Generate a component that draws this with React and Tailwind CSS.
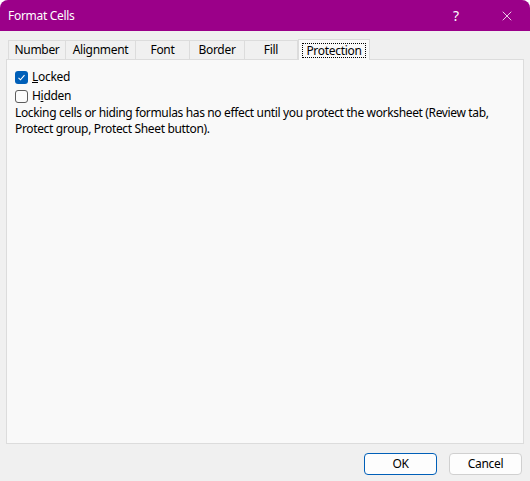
import { X } from "lucide-react";

const tabs = [
  { label: "Number", w: "w-[58px]" },
  { label: "Alignment", w: "w-[70px]" },
  { label: "Font", w: "w-[54px]" },
  { label: "Border", w: "w-[55px]" },
  { label: "Fill", w: "w-[53px]" },
];

function Checkbox({ checked }) {
  return checked ? (
    <span className="w-[13px] h-[13px] rounded-[3px] bg-[#005fb8] flex items-center justify-center">
      <svg width="9" height="9" viewBox="0 0 9 9" fill="none">
        <path d="M1.5 4.8l2 2 4-4.6" stroke="white" strokeWidth="1.1" />
      </svg>
    </span>
  ) : (
    <span className="w-[13px] h-[13px] rounded-[3px] border border-[#5c5c5c] bg-[#fbfbfb]" />
  );
}

export default function App() {
  return (
    <div
      className="w-[530px] h-[481px] bg-white text-[12px] text-black tracking-[-0.3px]"
      style={{ fontFamily: '"Noto Sans", "Liberation Sans", sans-serif' }}
    >
      <div className="w-full h-full rounded-t-[8px] overflow-hidden bg-[#f0f0f0] flex flex-col">
        {/* title bar */}
        <div className="h-[31px] bg-[#9b0089] flex items-center text-white shrink-0">
          <span className="pl-[8px] text-[12px]">Format Cells</span>
          <span className="ml-auto w-[30px] text-center text-[14px] mr-[28px]">?</span>
          <X className="w-[16px] h-[16px] mr-[15px]" strokeWidth={1.2} />
        </div>

        {/* tabs */}
        <div className="flex pl-[8px] pt-[8px] h-[28px] shrink-0 items-end">
          {tabs.map((t) => (
            <div
              key={t.label}
              className={`${t.w} h-[19px] border-t border-r border-[#dcdcdc] first:border-l bg-[#f0f0f0] flex items-center justify-center`}
            >
              {t.label}
            </div>
          ))}
          <div className="w-[72px] h-[21px] -mb-px bg-[#f9f9f9] border-t border-x border-[#dcdcdc] relative z-10 flex items-center justify-center">
            <span className="border border-dotted border-black px-[3px] leading-[13px]">Protection</span>
          </div>
        </div>

        {/* panel */}
        <div className="mx-[6px] h-[385px] bg-[#f9f9f9] border border-[#dcdcdc] px-[8px] pt-[9px]">
          <div className="flex items-center gap-[4px] h-[16px]">
            <Checkbox checked />
            <span>
              <u>L</u>ocked
            </span>
          </div>
          <div className="flex items-center gap-[4px] h-[16px] mt-[3px]">
            <Checkbox />
            <span>
              H<u>i</u>dden
            </span>
          </div>
          <p className="mt-[1px] leading-[16px] whitespace-nowrap tracking-[-0.35px]">
            Locking cells or hiding formulas has no effect until you protect the worksheet (Review tab,
            <br />
            Protect group, Protect Sheet button).
          </p>
        </div>

        {/* buttons */}
        <div className="flex justify-end gap-[12px] pr-[8px] mt-[9px]">
          <button className="w-[73px] h-[22px] rounded-[4px] border border-[#005fb8] bg-[#fdfdfd] text-[12px]">
            OK
          </button>
          <button className="w-[73px] h-[22px] rounded-[4px] border border-[#d0d0d0] bg-[#fdfdfd] text-[12px]">
            Cancel
          </button>
        </div>
      </div>
    </div>
  );
}
